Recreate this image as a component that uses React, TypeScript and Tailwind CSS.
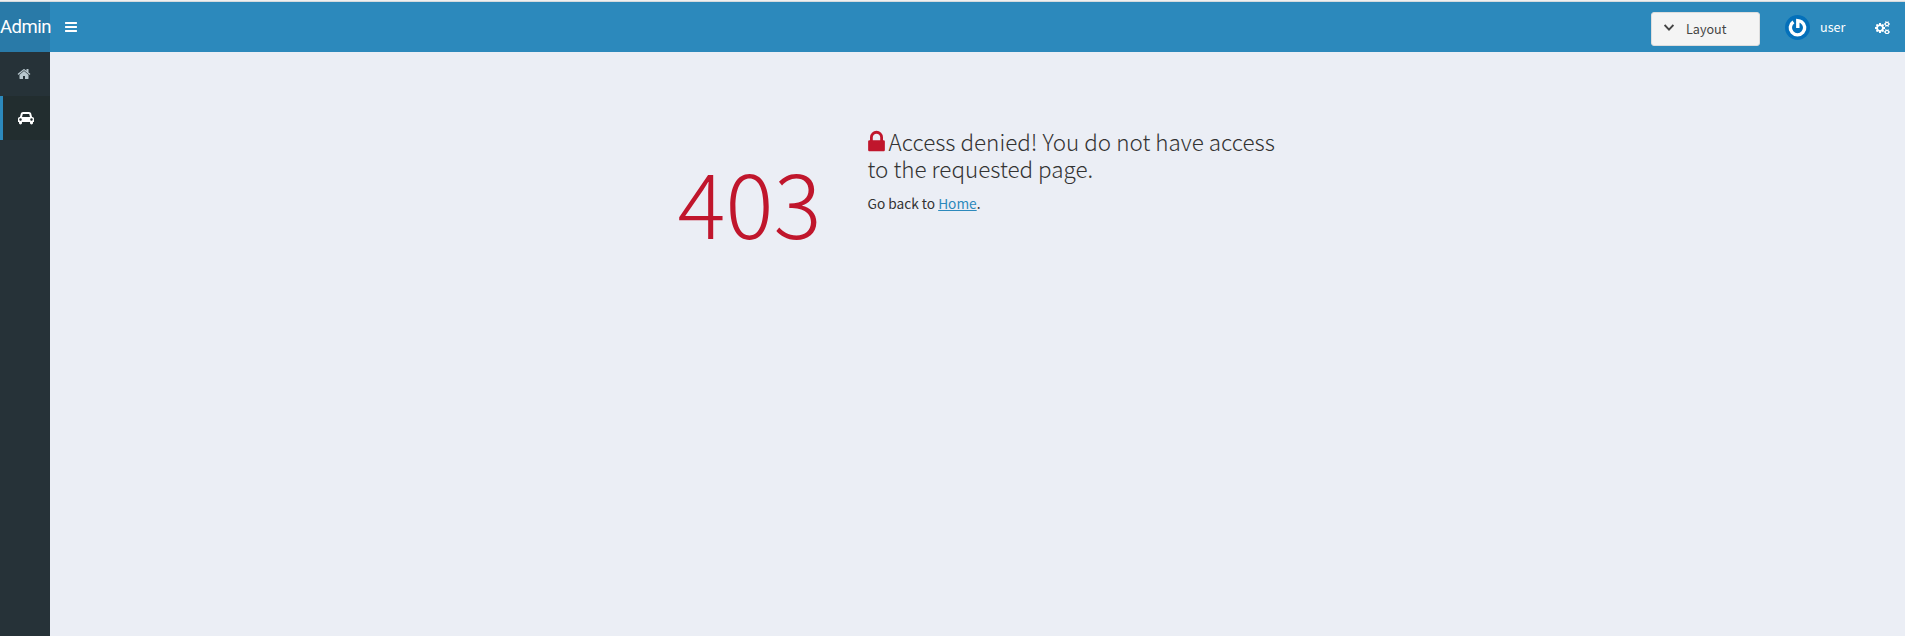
import React from "react";

const ICONS = {
  bars: {
    box: "0 0 1792 1792",
    d: "M1664 1344v128q0 26-19 45t-45 19h-1408q-26 0-45-19t-19-45v-128q0-26 19-45t45-19h1408q26 0 45 19t19 45zm0-512v128q0 26-19 45t-45 19h-1408q-26 0-45-19t-19-45v-128q0-26 19-45t45-19h1408q26 0 45 19t19 45zm0-512v128q0 26-19 45t-45 19h-1408q-26 0-45-19t-19-45v-128q0-26 19-45t45-19h1408q26 0 45 19t19 45z",
  },
  home: {
    box: "0 0 1792 1792",
    d: "M1472 992v480q0 26-19 45t-45 19h-384v-384h-256v384h-384q-26 0-45-19t-19-45v-480q0-1 .5-3t.5-3l575-474 575 474q1 2 1 6zm223-69l-62 74q-8 9-21 11h-3q-13 0-21-7l-692-577-692 577q-12 8-24 7-13-2-21-11l-62-74q-8-10-7-23.5t11-21.5l719-599q32-26 76-26t76 26l244 204v-195q0-14 9-23t23-9h192q14 0 23 9t9 23v408l219 182q10 8 11 21.5t-7 23.5z",
  },
  car: {
    box: "0 0 2048 1792",
    d: "M480 1088q0-66-47-113t-113-47-113 47-47 113 47 113 113 47 113-47 47-113zm36-320h1016l-89-357q-2-8-14-17.5t-21-9.5h-768q-9 0-21 9.5t-14 17.5zm1372 320q0-66-47-113t-113-47-113 47-47 113 47 113 113 47 113-47 47-113zm160-96v384q0 14-9 23t-23 9h-96v128q0 80-56 136t-136 56-136-56-56-136v-128h-1024v128q0 80-56 136t-136 56-136-56-56-136v-128h-96q-14 0-23-9t-9-23v-384q0-93 65.5-158.5t158.5-65.5h28l105-419q23-94 104-157.5t179-63.5h768q98 0 179 63.5t104 157.5l105 419h28q93 0 158.5 65.5t65.5 158.5z",
  },
  lock: {
    box: "320 0 1152 1792",
    d: "M640 768h512v-192q0-106-75-181t-181-75-181 75-75 181v192zm832 96v576q0 40-28 68t-68 28h-960q-40 0-68-28t-28-68v-576q0-40 28-68t68-28h32v-192q0-184 132-316t316-132 316 132 132 316v192h32q40 0 68 28t28 68z",
  },
  cogs: {
    box: "0 0 1920 1792",
    d: "M896 1024q0-106-75-181t-181-75-181 75-75 181 75 181 181 75 181-75 75-181zm768 512q0-52-38-90t-90-38-90 38-38 90q0 53 37.5 90.5t90.5 37.5 90.5-37.5 37.5-90.5zm0-1024q0-52-38-90t-90-38-90 38-38 90q0 53 37.5 90.5t90.5 37.5 90.5-37.5 37.5-90.5zm-384 421v185q0 10-7 19.5t-16 10.5l-155 24q-11 35-32 76 34 48 90 115 7 11 7 20 0 12-7 19-23 30-82.5 89.5t-78.5 59.5q-11 0-21-7l-115-90q-37 19-77 31-11 108-23 155-7 24-30 24h-186q-11 0-20-7.5t-10-17.5l-23-153q-34-10-75-31l-118 89q-7 7-20 7-11 0-21-8-144-133-144-160 0-9 7-19 10-14 41-53t47-61q-23-44-35-82l-152-24q-10-1-17-9.5t-7-19.5v-185q0-10 7-19.5t16-10.5l155-24q11-35 32-76-34-48-90-115-7-11-7-20 0-12 7-20 22-30 82-89t79-59q11 0 21 7l115 90q34-18 77-32 11-108 23-154 7-24 30-24h186q11 0 20 7.5t10 17.5l23 153q34 10 75 31l118-89q8-7 20-7 11 0 21 8 144 133 144 160 0 8-7 19-12 16-42 54t-45 60q23 48 34 82l152 23q10 2 17 10.5t7 19.5zm640 533v140q0 16-149 31-12 27-30 52 51 113 51 138 0 4-4 7-122 71-124 71-8 0-46-47t-52-68q-20 2-30 2t-30-2q-14 21-52 68t-46 47q-2 0-124-71-4-3-4-7 0-25 51-138-18-25-30-52-149-15-149-31v-140q0-16 149-31 13-29 30-52-51-113-51-138 0-4 4-7 4-2 35-20t59-34 30-16q8 0 46 46.5t52 67.5q20-2 30-2t30 2q51-71 92-112l6-2q4 0 124 70 4 3 4 7 0 25-51 138 17 23 30 52 149 15 149 31zm0-1024v140q0 16-149 31-12 27-30 52 51 113 51 138 0 4-4 7-122 71-124 71-8 0-46-47t-52-68q-20 2-30 2t-30-2q-14 21-52 68t-46 47q-2 0-124-71-4-3-4-7 0-25 51-138-18-25-30-52-149-15-149-31v-140q0-16 149-31 13-29 30-52-51-113-51-138 0-4 4-7 4-2 35-20t59-34 30-16q8 0 46 46.5t52 67.5q20-2 30-2t30 2q51-71 92-112l6-2q4 0 124 70 4 3 4 7 0 25-51 138 17 23 30 52 149 15 149 31z",
  },
};

function Icon({ name, className }: { name: keyof typeof ICONS; className: string }) {
  return (
    <svg viewBox={ICONS[name].box} className={className} fill="currentColor" aria-hidden="true">
      <path d={ICONS[name].d} />
    </svg>
  );
}

function Avatar() {
  return (
    <svg viewBox="0 0 25 25" className="size-[25px]" aria-hidden="true">
      <circle cx="12.5" cy="12.5" r="12.5" fill="#0470ba" />
      <path
        d="M8.4 6.8 A7.2 7.2 0 1 0 16.6 6.8 A7.2 7.2 0 0 0 12.8 5.6 V13"
        fill="none"
        stroke="#fff"
        strokeWidth="3.4"
      />
    </svg>
  );
}

function Header() {
  return (
    <header className="flex h-[50px] shrink-0 bg-[#2c89bc] text-white">
      <a className="w-[50px] whitespace-nowrap bg-[#297aa8] font-[Roboto,sans-serif] text-[18.5px] leading-[50px] tracking-[-0.5px]">
        Admin
      </a>
      <button className="flex items-center pb-px pl-[14px]" aria-label="Toggle navigation">
        <Icon name="bars" className="size-[14px]" />
      </button>
      <div className="ml-auto flex">
        <button className="mt-[10px] flex h-[34px] w-[109px] items-center rounded-[3px] border border-[#dddddd] bg-[#f4f4f4] pl-[12px] text-[#444444]">
          <svg viewBox="0 0 10 7" className="mb-[3px] h-[7px] w-[10px]" fill="none" stroke="currentColor" strokeWidth="1.9">
            <path d="M.6 1 5 5.6 9.4 1" />
          </svg>
          <span className="ml-[12px] text-[12.6px] leading-5">Layout</span>
        </button>
        <div className="ml-[25px] flex items-center">
          <Avatar />
          <span className="ml-[10px] w-[25px] text-[12.6px] leading-5">user</span>
        </div>
        <button className="ml-[30px] mr-[15px] flex items-center pb-px" aria-label="Settings">
          <Icon name="cogs" className="h-[14px] w-[15px]" />
        </button>
      </div>
    </header>
  );
}

export default function App() {
  return (
    <div className="flex h-[636px] flex-col overflow-hidden border-t border-[#f0f0f0] bg-[#ebeef5] font-['Noto_Sans_CJK_SC',sans-serif]">
      <div className="h-px shrink-0 bg-[#d5dadd]" />
      <Header />
      <div className="flex flex-1">
        <nav className="w-[50px] bg-[#263238]">
          <a className="flex h-[44px] items-center pl-[17px] text-[#b8c7ce]">
            <Icon name="home" className="size-[14px]" />
          </a>
          <a className="flex h-[44px] items-center border-l-[3px] border-[#2c89bc] bg-[#222d2f] pl-[15px] text-white">
            <Icon name="car" className="h-[14px] w-4" />
          </a>
        </nav>
        <main className="flex-1">
          <div className="mx-auto flex w-[600px] pt-[76px]">
            <h2 className="w-[190px] pt-[17px] text-[89.7px] font-light leading-[110px] text-[#c0162c]">403</h2>
            <div className="w-[410px]">
              <h3 className="text-[22.45px] font-light leading-[27px] text-[#333333]">
                <Icon name="lock" className="mr-[4px] inline-block h-[26px] w-[17px] align-[-4px] text-[#c0162c]" />
                Access denied! You do not have access to the requested page.
              </h3>
              <p className="mt-[11px] text-[13.7px] leading-5 text-[#333333]">
                Go back to <a className="text-[#2c89bc] underline">Home</a>.
              </p>
            </div>
          </div>
        </main>
      </div>
    </div>
  );
}
